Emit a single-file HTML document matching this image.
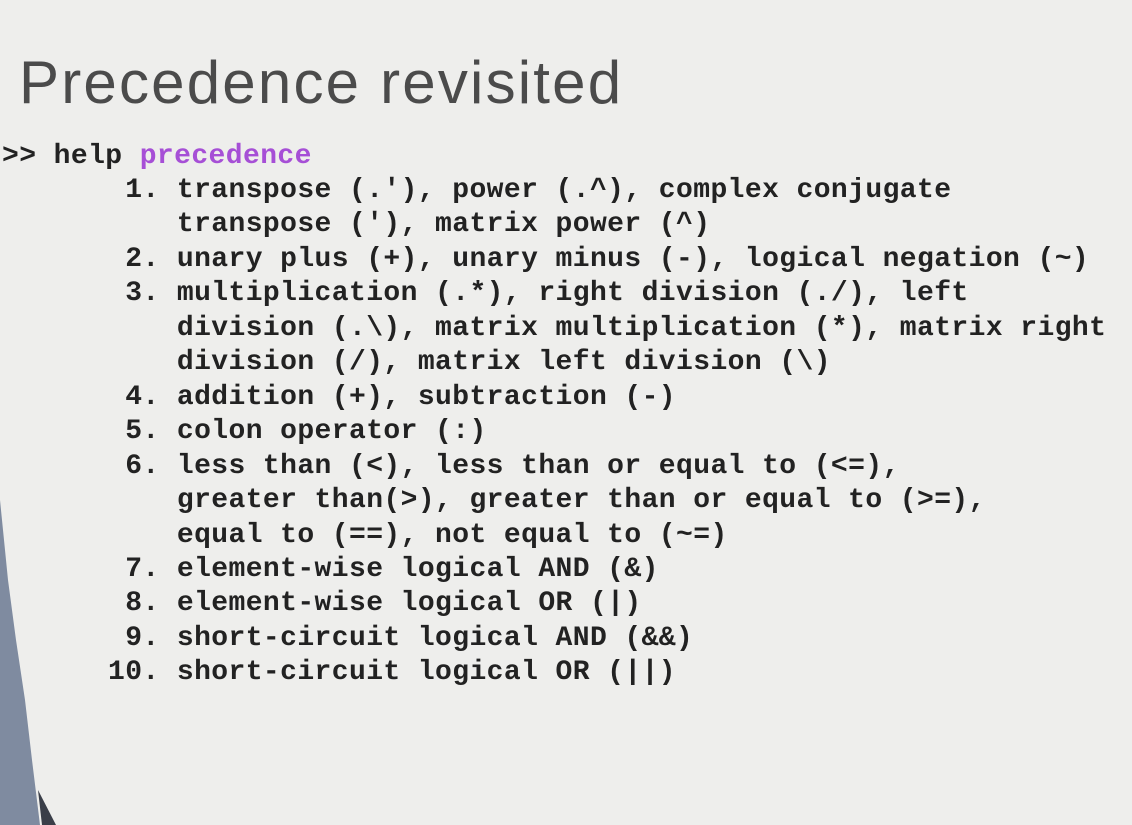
<!DOCTYPE html>
<html><head><meta charset="utf-8"><style>
html,body{margin:0;padding:0}
body{width:1132px;height:825px;overflow:hidden;position:relative;background:#eeeeec;}
.title{position:absolute;left:19px;top:53px;font-family:"Liberation Sans",sans-serif;font-size:60px;line-height:1;color:#4b4b4b;letter-spacing:2.2px;white-space:nowrap;}
pre{position:absolute;margin:0;font-family:"Liberation Mono",monospace;font-weight:bold;font-size:28px;line-height:34.45px;letter-spacing:0.41px;color:#222;}
.p{color:#a64fd6}
</style></head><body>
<div class="title">Precedence revisited</div>
<pre style="left:2px;top:140px">&gt;&gt; help <span class="p">precedence</span></pre>
<pre style="left:108px;top:174px"> 1. transpose (.'), power (.^), complex conjugate
    transpose ('), matrix power (^)
 2. unary plus (+), unary minus (-), logical negation (~)
 3. multiplication (.*), right division (./), left
    division (.\), matrix multiplication (*), matrix right
    division (/), matrix left division (\)
 4. addition (+), subtraction (-)
 5. colon operator (:)
 6. less than (&lt;), less than or equal to (&lt;=),
    greater than(&gt;), greater than or equal to (&gt;=),
    equal to (==), not equal to (~=)
 7. element-wise logical AND (&amp;)
 8. element-wise logical OR (|)
 9. short-circuit logical AND (&amp;&amp;)
10. short-circuit logical OR (||)</pre>
<svg style="position:absolute;left:0;top:0" width="1132" height="825">
<polygon points="0,500 2,520 8,580 16,640 25,700 32,760 40,825 0,825" fill="#7f8ba0"/>
<polygon points="38,790 56,825 42,825" fill="#3a3e48"/>
</svg>
</body></html>
